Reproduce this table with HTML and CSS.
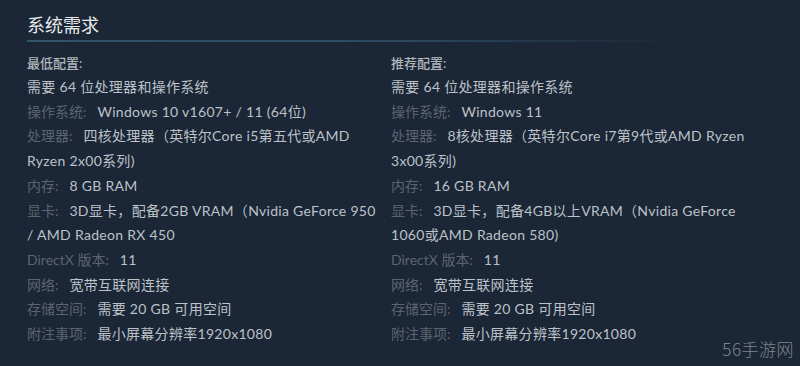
FILE: index.html
```html
<!DOCTYPE html>
<html lang="zh-CN">
<head>
<meta charset="utf-8">
<link rel="stylesheet" href="styles.css">
</head>
<body>
<div class="page">
  <h2 class="title">系统需求</h2>
  <div class="rule"></div>
  <div class="cols">
    <ul class="col">
      <li class="head">最低配置:</li>
      <li>需要 64 位处理器和操作系统</li>
      <li><span class="lbl">操作系统:</span> Windows 10 v1607+ / 11 (64位)</li>
      <li><span class="lbl">处理器:</span> 四核处理器（英特尔Core i5第五代或AMD<br>Ryzen 2x00系列)</li>
      <li><span class="lbl">内存:</span> 8 GB RAM</li>
      <li><span class="lbl">显卡:</span> 3D显卡，配备2GB VRAM（Nvidia GeForce 950<br>/ AMD Radeon RX 450</li>
      <li><span class="lbl">DirectX 版本:</span> 11</li>
      <li><span class="lbl">网络:</span> 宽带互联网连接</li>
      <li><span class="lbl">存储空间:</span> 需要 20 GB 可用空间</li>
      <li><span class="lbl">附注事项:</span> 最小屏幕分辨率1920x1080</li>
    </ul>
    <ul class="col">
      <li class="head">推荐配置:</li>
      <li>需要 64 位处理器和操作系统</li>
      <li><span class="lbl">操作系统:</span> Windows 11</li>
      <li><span class="lbl">处理器:</span> 8核处理器（英特尔Core i7第9代或AMD Ryzen<br>3x00系列)</li>
      <li><span class="lbl">内存:</span> 16 GB RAM</li>
      <li><span class="lbl">显卡:</span> 3D显卡，配备4GB以上VRAM（Nvidia GeForce<br>1060或AMD Radeon 580)</li>
      <li><span class="lbl">DirectX 版本:</span> 11</li>
      <li><span class="lbl">网络:</span> 宽带互联网连接</li>
      <li><span class="lbl">存储空间:</span> 需要 20 GB 可用空间</li>
      <li><span class="lbl">附注事项:</span> 最小屏幕分辨率1920x1080</li>
    </ul>
  </div>
  <div class="mark">56手游网</div>
</div>
</body>
</html>
```
FILE: styles.css
```css
html, body {
  margin: 0;
  padding: 0;
  background: #1b2636;
}
.page {
  position: relative;
  width: 800px;
  height: 366px;
  overflow: hidden;
  padding: 13px 0 0 27px;
  box-sizing: border-box;
  font-family: "Lato", "Noto Sans CJK SC", sans-serif;
}
.title {
  margin: 0;
  font-family: "Noto Sans CJK SC", sans-serif;
  font-weight: 400;
  font-size: 18px;
  line-height: 23px;
  color: #e8eaec;
}
.rule {
  margin-top: 4px;
  width: 655px;
  height: 2px;
  background: linear-gradient(to right, #33546c 0%, #2d4a60 55%, rgba(40, 66, 88, 0) 100%);
}
.cols {
  display: flex;
  margin-top: 10px;
}
.col {
  list-style: none;
  margin: 0;
  padding: 0;
  width: 364px;
  white-space: nowrap;
  font-size: 14px;
  letter-spacing: 0.3px;
  line-height: 24.7px;
  color: #bcc2c8;
  font-weight: 400;
}
.col li.head {
  font-size: 13px;
  letter-spacing: 0;
  color: #b0b6bc;
  font-weight: 500;
  line-height: 23px;
}
.lbl {
  color: #5b6571;
  font-weight: 400;
  letter-spacing: 0;
  margin-right: 7px;
}
.mark {
  position: absolute;
  right: 6px;
  bottom: 5px;
  font-family: "Noto Sans CJK SC", sans-serif;
  font-weight: 300;
  font-size: 17px;
  letter-spacing: 0.5px;
  color: #7f8790;
}
```
